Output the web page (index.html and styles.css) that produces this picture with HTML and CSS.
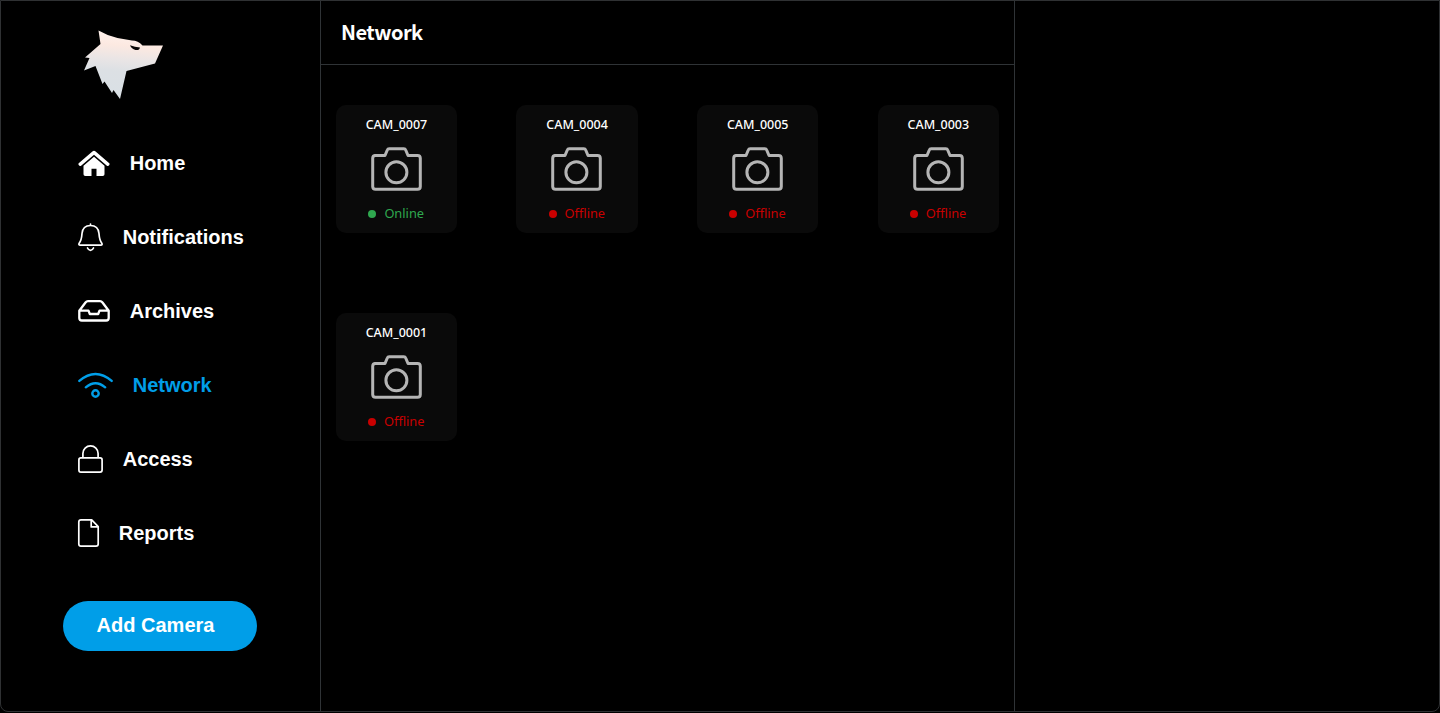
FILE: index.html
```html
<!DOCTYPE html>
<html lang="en">
<head>
<meta charset="utf-8">
<title>Network</title>
<link rel="stylesheet" href="styles.css">
</head>
<body>
<svg width="0" height="0" class="defs">
  <symbol id="camera" viewBox="0 0 51 44">
    <path d="M3.500 8.500H14L16.300 3Q16.800 1.700 18.200 1.700H32.800Q34.200 1.700 34.700 3L37 8.500H46.500Q49.300 8.500 49.300 11.300V39.500Q49.300 42.300 46.500 42.300H4.500Q1.700 42.300 1.700 39.500V11.300Q1.700 8.500 4.500 8.500Z" fill="none" stroke="#b5b5b5" stroke-width="3" stroke-linejoin="round"/>
    <circle cx="25.400" cy="25.300" r="10.500" fill="none" stroke="#b5b5b5" stroke-width="3"/>
  </symbol>
</svg>
<div class="app">
  <aside class="sidebar">
    <svg class="logo" width="80" height="70" viewBox="0 0 80 70">
      <defs><linearGradient id="fur" x1="0.55" y1="0" x2="0.45" y2="1"><stop offset="0" stop-color="#fff3ee"/><stop offset=".22" stop-color="#fce9e1"/><stop offset=".42" stop-color="#eae5e5"/><stop offset=".6" stop-color="#dce0e4"/><stop offset="1" stop-color="#d9e0e5"/></linearGradient></defs>
      <path fill="url(#fur)" d="M14.500 .5Q24 6 33.500 8L48 10.500Q54 10.500 58.500 15.500L79 15.500L71 33.500L42.500 41L36 69L29.500 60L28 63L20.500 51.500L18.500 54L11.500 36L0 40.500L5.500 28L1 27.500L16.500 14Z"/>
      <path fill="#090605" d="M46 15.300Q51 17.200 56 17.500Q55.500 20.500 51.500 20Q47.500 19 46 15.300Z"/>
    </svg>
    <nav class="nav">
      <a class="item"><svg width="32" height="26" viewBox="0 0 32 26" fill="currentColor"><g transform="translate(0 .8)"><path d="M16 0Q16.800 0 17.600.7L31.300 12.500Q32 13.300 31.300 14.100L30.500 15Q29.700 15.600 28.900 15L16 4L3.100 15Q2.300 15.600 1.500 15L.7 14.100Q0 13.300.7 12.500L14.400.7Q15.200 0 16 0Z"/><path d="M16 6L26.500 14.900V23.500Q26.500 25.300 24.700 25.300H18.500V18H13.500V25.300H7.300Q5.500 25.300 5.500 23.500V14.900Z"/></g></svg><span>Home</span></a>
      <a class="item"><svg width="25" height="28" viewBox="0 0 25 28" fill="none" stroke="currentColor" stroke-width="1.700" stroke-linecap="round"><path d="M12.500 1V2.500M2.300 22.200Q.2 22 1.200 20.200C3.600 17 3.700 14.500 4 10.500C4.500 5 7.700 2.500 12.500 2.500S20.500 5 21 10.500C21.300 14.500 21.400 17 23.800 20.200Q24.800 22 22.700 22.200ZM9.500 25Q10.500 27.300 12.500 27.300T15.500 25"/></svg><span>Notifications</span></a>
      <a class="item"><svg width="32" height="22" viewBox="0 0 32 22" fill="none" stroke="currentColor" stroke-width="2.300" stroke-linejoin="round" stroke-linecap="round"><path d="M1.300 10.700L7.500 2.500Q8.500 1.200 10 1.200H22Q23.500 1.200 24.500 2.500L30.700 10.700V18Q30.700 20.500 28.200 20.500H3.800Q1.300 20.500 1.300 18ZM1.300 10.700H10.500L11.800 14H20.200L21.500 10.700H30.700"/></svg><span>Archives</span></a>
      <a class="item active"><svg width="35" height="26" viewBox="0 0 35 26" fill="none" stroke="currentColor" stroke-width="2.400" stroke-linecap="round"><g transform="translate(0 .5)"><path d="M1.300 8.400Q17.500-5.500 33.700 8.400M7.800 14.800Q17.500 6.500 27.200 14.800"/><circle cx="17.500" cy="21" r="3.200"/></g></svg><span>Network</span></a>
      <a class="item"><svg width="25" height="28" viewBox="0 0 25 28" fill="none" stroke="currentColor" stroke-width="1.700"><rect x=".9" y="12.900" width="23.200" height="14.200" rx="2"/><path d="M4.900 12.900V8.500A7.600 7.600 0 0 1 20.100 8.500V12.900"/></svg><span>Access</span></a>
      <a class="item"><svg width="21" height="28" viewBox="0 0 21 28" fill="none" stroke="currentColor" stroke-width="1.700" stroke-linejoin="round"><path d="M13.700.8H3Q.8.800.8 3V25Q.8 27.200 3 27.200H18Q20.200 27.200 20.200 25V7.600ZM13.200.8V7.900H20.200"/></svg><span>Reports</span></a>
    </nav>
    <button class="add">Add Camera</button>
  </aside>
  <main class="main">
    <header class="head">Network</header>
    <section class="grid">
      <article class="card"><h3>CAM_0007</h3><svg width="51" height="44"><use href="#camera"/></svg><p class="on"><i></i>Online</p></article>
      <article class="card"><h3>CAM_0004</h3><svg width="51" height="44"><use href="#camera"/></svg><p><i></i>Offline</p></article>
      <article class="card"><h3>CAM_0005</h3><svg width="51" height="44"><use href="#camera"/></svg><p><i></i>Offline</p></article>
      <article class="card"><h3>CAM_0003</h3><svg width="51" height="44"><use href="#camera"/></svg><p><i></i>Offline</p></article>
      <article class="card"><h3>CAM_0001</h3><svg width="51" height="44"><use href="#camera"/></svg><p><i></i>Offline</p></article>
    </section>
  </main>
</div>
</body>
</html>
```
FILE: styles.css
```css
* { box-sizing: border-box; }
body { margin: 0; background: #000; color: #fff; overflow: hidden; }
.defs { position: absolute; }
.app { display: flex; height: 712px; border: 1px solid #2f3133; border-radius: 0 0 8px 8px; }
.sidebar { width: 319px; flex: none; display: flex; flex-direction: column; align-items: flex-start; }
.logo { display: block; margin: 29px 0 0 83px; }
.nav { margin: 26px 0 0 76.700px; display: flex; flex-direction: column; }
.item { display: flex; align-items: center; gap: 20px; height: 74px; font: bold 20px/24px "Liberation Sans", Arial, sans-serif; }
.item svg { flex: none; overflow: visible; }
.active { color: #009ee8; }
.add { margin: 31px 0 0 62px; width: 194px; height: 50px; border: 0; border-radius: 25px; background: #009ee8; color: #fff; font: bold 20px/24px "Liberation Sans", Arial, sans-serif; padding: 0 9px 2px 0; }
.main { width: 695px; flex: none; border: solid #2f3336; border-width: 0 1px; }
.head { height: 64px; border-bottom: 1px solid #2f3336; padding: 16px 20px 0; font: bold 20px/29px "Noto Sans CJK SC", sans-serif; letter-spacing: -.5px; }
.grid { display: grid; grid-template-columns: repeat(4, 121.300px); justify-content: space-between; row-gap: 80px; padding: 40px 15px 40px 14.800px; }
.card { height: 128px; border-radius: 10px; background: #0a0a0a; display: flex; flex-direction: column; align-items: center; }
.card h3 { margin: 11px 0 0; font: 500 12.500px/18px "Noto Sans", sans-serif; }
.card svg { margin: 13px .2px 0 0; flex: none; }
.card p { margin: 13px .5px 0 0; display: flex; align-items: center; font: 12.800px/18px "Noto Sans", sans-serif; color: #c90000; }
.card i { width: 8px; height: 8px; border-radius: 50%; background: currentColor; margin-right: 8px; position: relative; top: 1px; }
.card .on { color: #2fa84f; }
```
